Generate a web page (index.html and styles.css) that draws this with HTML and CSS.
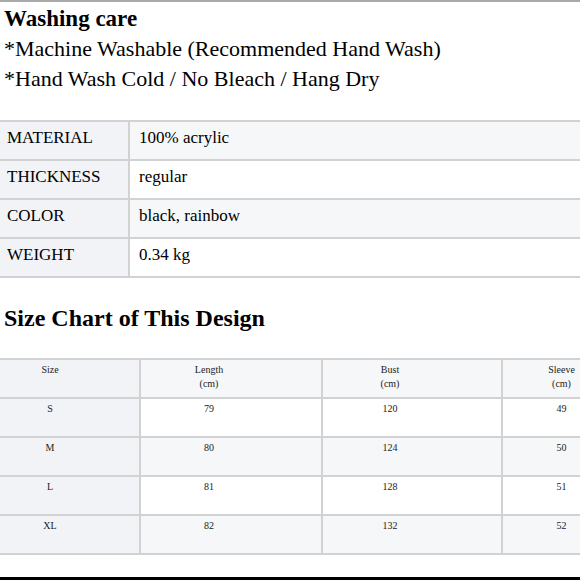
FILE: index.html
```html
<!DOCTYPE html>
<html lang="en">
<head>
<meta charset="utf-8">
<title>Washing care</title>
<link rel="stylesheet" href="styles.css">
</head>
<body>
<div class="page">
  <section class="care">
    <h1 class="title">Washing care</h1>
    <p class="line">*Machine Washable (Recommended Hand Wash)</p>
    <p class="line">*Hand Wash Cold / No Bleach / Hang Dry</p>
  </section>

  <div class="spec">
    <div class="label alt">MATERIAL</div><div class="value alt">100% acrylic</div>
    <div class="label">THICKNESS</div><div class="value">regular</div>
    <div class="label alt">COLOR</div><div class="value alt">black, rainbow</div>
    <div class="label">WEIGHT</div><div class="value">0.34 kg</div>
  </div>

  <h2 class="title chart-title">Size Chart of This Design</h2>

  <div class="sizes">
    <div class="cell first">Size</div><div class="cell alt">Length<br>(cm)</div><div class="cell alt">Bust<br>(cm)</div><div class="cell alt">Sleeve<br>(cm)</div>
    <div class="cell first">S</div><div class="cell">79</div><div class="cell">120</div><div class="cell">49</div>
    <div class="cell first">M</div><div class="cell alt">80</div><div class="cell alt">124</div><div class="cell alt">50</div>
    <div class="cell first">L</div><div class="cell">81</div><div class="cell">128</div><div class="cell">51</div>
    <div class="cell first">XL</div><div class="cell alt">82</div><div class="cell alt">132</div><div class="cell alt">52</div>
  </div>

  <div class="bottom-rule"></div>
</div>
</body>
</html>
```

FILE: styles.css
```css
* {
  box-sizing: border-box;
}

html, body {
  margin: 0;
  padding: 0;
  background: #ffffff;
  overflow: hidden;
}

body {
  width: 580px;
  height: 580px;
  font-family: "Liberation Serif", "Times New Roman", serif;
  color: #000;
}

.page {
  border-top: 2px solid #a9a9a9;
  width: 580px;
  height: 580px;
  overflow: hidden;
}

.care {
  padding: 2px 4px 0;
}

.title {
  margin: 0;
  font-size: 23px;
  line-height: 30px;
  font-weight: bold;
}

.line {
  margin: 0;
  font-size: 22px;
  line-height: 30px;
}

.spec {
  margin-top: 26px;
  width: 640px;
  display: grid;
  grid-template-columns: 130px 1fr;
  grid-auto-rows: 39px;
  border-top: 2px solid #d2d2d2;
  font-size: 17px;
  line-height: 20px;
}

.label {
  background: #f2f3f6;
  border-right: 2px solid #d2d2d2;
  border-bottom: 2px solid #d2d2d2;
  padding: 6px 0 0 7px;
}

.value {
  background: #ffffff;
  border-bottom: 2px solid #d2d2d2;
  padding: 6px 0 0 9px;
}

.value.alt {
  background: #f6f7f9;
}

.chart-title {
  margin-top: 25px;
  padding-left: 4px;
  font-size: 24px;
}

.sizes {
  margin-top: 25px;
  width: 666px;
  display: grid;
  grid-template-columns: 141px 182px 180px 163px;
  grid-auto-rows: 39px;
  border-top: 2px solid #d2d2d2;
  font-size: 10px;
  line-height: 14px;
  color: #222;
}

.cell {
  background: #ffffff;
  border-right: 2px solid #d2d2d2;
  border-bottom: 2px solid #d2d2d2;
  padding: 3px 44px 0 0;
  text-align: center;
}

.cell.alt {
  background: #f6f7f9;
}

.cell.first {
  background: #f2f3f6;
  padding-right: 39px;
}

.bottom-rule {
  margin-top: 22px;
  height: 3px;
  background: #000;
}
```
